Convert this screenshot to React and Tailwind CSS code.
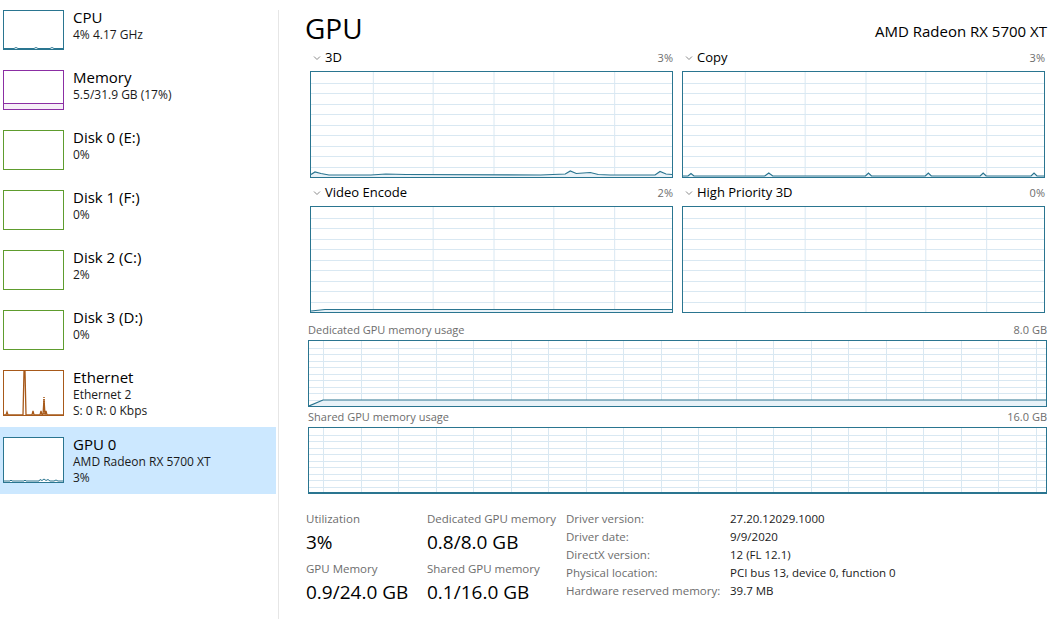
import React from 'react'

const FONT = { fontFamily: '"Segoe UI", "Open Sans", "Noto Sans", sans-serif' }

function Chevron() {
  return (
    <svg width="8" height="6" viewBox="0 0 8 6" className="mr-[4px]">
      <path d="M1 1.5 L4 4.5 L7 1.5" fill="none" stroke="#8a8a8a" strokeWidth="1" />
    </svg>
  )
}

function Grid({ w, h, cols, rows, offset = 0 }) {
  const lines = []
  for (let i = 1; i < rows; i++) {
    const y = Math.round((h / rows) * i) + 0.5
    lines.push(<line key={'r' + i} x1="0" x2={w} y1={y} y2={y} />)
  }
  for (let x = offset; x < w; x += cols) {
    const xx = Math.round(x) + 0.5
    lines.push(<line key={'c' + x} x1={xx} x2={xx} y1="0" y2={h} />)
  }
  return <g stroke="#d9e8f2" strokeWidth="1">{lines}</g>
}

function Chart({ h, w, cols, offset, trace, className }) {
  return (
    <div className={`border border-[#2a7590] bg-white ${className}`} style={{ height: h }}>
      <svg width="100%" height="100%" viewBox={`0 0 ${w} ${h - 2}`} preserveAspectRatio="none" className="block">
        <Grid w={w} h={h - 2} cols={cols} rows={10} offset={offset} />
        {trace && (
          <>
            <polygon points={`0,${h - 2} ${trace} ${w},${h - 2}`} fill="#e8f2f8" />
            <polyline points={trace} fill="none" stroke="#2a7590" strokeWidth="1.2" />
          </>
        )}
      </svg>
    </div>
  )
}

function EngineChart({ name, pct, trace }) {
  return (
    <div className="flex flex-col">
      <div className="flex items-center h-[16px] pl-[3px]">
        <Chevron />
        <span className="text-[13px] text-black">{name}</span>
        <span className="ml-auto text-[11px] text-[#6d6d6d]">{pct}</span>
      </div>
      <Chart h={107} w={362} cols={60.5} offset={61.5} trace={trace} className="mt-[5px]" />
    </div>
  )
}

function Thumb({ border, h, children }) {
  return (
    <div className={`w-[61px] shrink-0 border bg-white ${border}`} style={{ height: h }}>
      <svg width="59" height={h - 2} viewBox={`0 0 59 ${h - 2}`} className="block">
        {children}
      </svg>
    </div>
  )
}

function SideItem({ title, lines, border, tall, selected, children }) {
  const h = tall ? 46 : 40
  return (
    <div className={`flex pl-[3px] pt-[10px] ${tall ? 'h-[67px]' : 'h-[60px]'} ${selected ? 'bg-[#cce8ff]' : ''}`}>
      <Thumb border={border} h={h}>{children}</Thumb>
      <div className="ml-[9px] -mt-[3px]">
        <div className="text-[15px] leading-[20px] text-black">{title}</div>
        {lines.map((l, i) => (
          <div key={i} className="text-[12px] leading-[16px] text-[#1a1a1a]">{l}</div>
        ))}
      </div>
    </div>
  )
}

const Stat = ({ label, value }) => (
  <div className="flex flex-col">
    <div className="text-[11.5px] leading-[16px] text-[#6d6d6d]">{label}</div>
    <div className="text-[19px] leading-[26px] text-black mt-[2px]">{value}</div>
  </div>
)

const info = [
  ['Driver version:', '27.20.12029.1000'],
  ['Driver date:', '9/9/2020'],
  ['DirectX version:', '12 (FL 12.1)'],
  ['Physical location:', 'PCI bus 13, device 0, function 0'],
  ['Hardware reserved memory:', '39.7 MB'],
]

export default function App() {
  return (
    <div className="flex w-[1059px] h-[619px] bg-white overflow-hidden" style={FONT}>
      <aside className="w-[276px] shrink-0">
        <SideItem title="CPU" lines={['4% 4.17 GHz']} border="border-[#2a7590]">
          <polyline points="0,37.5 10,37.5 12,36.5 14,37.5 30,37.5 32,36.5 34,37.5 46,37.5 48,36.5 50,37.5 59,37.5" fill="none" stroke="#2a7590" strokeWidth="1" />
        </SideItem>
        <SideItem title="Memory" lines={['5.5/31.9 GB (17%)']} border="border-[#8b2ea3]">
          <rect x="0" y="32" width="59" height="6" fill="#f6eef8" />
          <line x1="0" x2="59" y1="32.5" y2="32.5" stroke="#8b2ea3" strokeWidth="1" />
        </SideItem>
        <SideItem title="Disk 0 (E:)" lines={['0%']} border="border-[#5e9c2e]" />
        <SideItem title="Disk 1 (F:)" lines={['0%']} border="border-[#5e9c2e]" />
        <SideItem title="Disk 2 (C:)" lines={['2%']} border="border-[#5e9c2e]" />
        <SideItem title="Disk 3 (D:)" lines={['0%']} border="border-[#5e9c2e]" />
        <SideItem title="Ethernet" lines={['Ethernet 2', 'S: 0 R: 0 Kbps']} border="border-[#a7591a]" tall>
          <polyline points="0,44 2,44 3,41 4,44 19,44 20,0 21,0 22,44 28,44 29,40 30,44 36,44 37,40 38,44 39,44 40,28 41,44 42,40 43,44 59,44" fill="none" stroke="#a7591a" strokeWidth="1.3" />
          <line x1="40" x2="40" y1="26" y2="44" stroke="#a7591a" strokeWidth="1.5" strokeDasharray="1 1" />
        </SideItem>
        <SideItem title="GPU 0" lines={['AMD Radeon RX 5700 XT', '3%']} border="border-[#2a7590]" tall selected>
          <polyline points="0,43 6,43 7,42 8,43 20,43 21,42 22,43 35,43 36,41.5 38,42.5 40,41 42,42.5 44,41.5 46,43 50,43 52,42 54,43 59,43" fill="none" stroke="#2a7590" strokeWidth="1" />
        </SideItem>
      </aside>
      <div className="w-[1px] bg-[#e6e6e6] mt-[10px] ml-[2px] shrink-0" />
      <main className="flex-1 flex flex-col pl-[29px] pr-[12px]">
        <div className="flex items-end justify-between h-[44px]">
          <div className="text-[28px] leading-[36px] text-black -ml-[3px] -mb-[2px]">GPU</div>
          <div className="text-[15px] leading-[20px] text-black mb-[3px]">AMD Radeon RX 5700 XT</div>
        </div>
        <div className="grid grid-cols-2 gap-x-[9px] gap-y-[7px] px-[2px] mt-[6px]">
          <EngineChart name="3D" pct="3%" trace="0,102.5 4,100 10,101.5 18,103 60,103 75,102 95,102.5 230,103 255,102 260,99 266,101.5 280,100.5 288,102.5 300,103 345,103 350,99.5 356,102 362,102.5" />
          <EngineChart name="Copy" pct="3%" trace="0,104 5,104 8,101.5 11,104 82,104 86,101 90,104 183,104 186,101 189,104 243,104 246,101 249,104 298,104 301,101 304,104 349,104 352,101 355,104 362,104" />
          <EngineChart name="Video Encode" pct="2%" trace="0,104 14,102.5 362,102.5" />
          <EngineChart name="High Priority 3D" pct="0%" />
        </div>
        <div className="flex items-center h-[16px] mt-[9px] text-[11px] text-[#6d6d6d]">
          <span>Dedicated GPU memory usage</span>
          <span className="ml-auto">8.0 GB</span>
        </div>
        <Chart h={67} w={737} cols={37.5} offset={14} trace="0,65 14,59 737,59" className="mt-[2px]" />
        <div className="flex items-center h-[16px] mt-[2px] text-[11px] text-[#6d6d6d]">
          <span>Shared GPU memory usage</span>
          <span className="ml-auto">16.0 GB</span>
        </div>
        <Chart h={67} w={737} cols={37.5} offset={14} trace="0,64.5 737,64.5" className="mt-[2px]" />
        <div className="flex mt-[17px] -ml-[2px]">
          <div className="flex flex-col gap-[6px] w-[121px]">
            <Stat label="Utilization" value="3%" />
            <Stat label="GPU Memory" value="0.9/24.0 GB" />
          </div>
          <div className="flex flex-col gap-[6px] w-[139px]">
            <Stat label="Dedicated GPU memory" value="0.8/8.0 GB" />
            <Stat label="Shared GPU memory" value="0.1/16.0 GB" />
          </div>
          <div className="flex flex-col text-[11.5px] leading-[18px] -mt-[1px]">
            {info.map(([k, v]) => (
              <div key={k} className="flex">
                <span className="w-[164px] shrink-0 text-[#6d6d6d]">{k}</span>
                <span className="text-[#1a1a1a]">{v}</span>
              </div>
            ))}
          </div>
        </div>
      </main>
    </div>
  )
}
